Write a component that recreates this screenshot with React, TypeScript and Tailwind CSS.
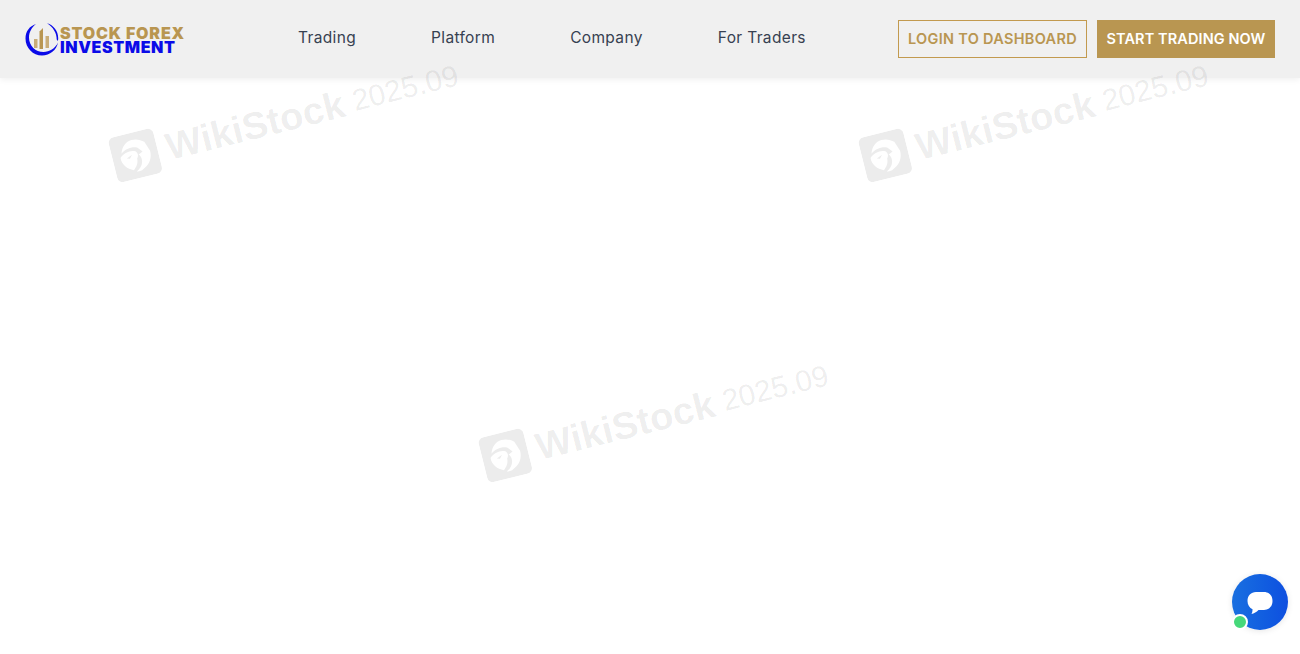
const navItems = ['Trading', 'Platform', 'Company', 'For Traders'];

const LogoMark = () => (
  <svg width="34" height="34" viewBox="0 0 34 34" fill="none">
    <path d="M11 2C4.500 4 0.500 9.500 0.500 16.500C0.500 26 8 33.500 17 33.500C25 33.500 31.500 28 33 20.500C30 26.500 24.500 30 18.500 30C10.500 30 4 24 4 15.500C4 10 6.800 5.300 11 2Z" fill="#0b0be8" />
    <path d="M22 1.200C28.500 3 33.200 9 33.200 16C33.200 17 33.100 18 32.900 19L31.700 17.500C31.900 11 28 5 22 1.200Z" fill="#0b0be8" />
    <rect x="9" y="17" width="3.500" height="9" fill="#c9ad78" />
    <path d="M14.500 9.500L18 6V27H14.500Z" fill="#b99651" />
    <rect x="20.500" y="14" width="3.500" height="12" fill="#c9ad78" />
  </svg>
);

const EagleBadge = () => (
  <svg width="46" height="46" viewBox="0 0 46 46" className="shrink-0">
    <rect x="0" y="0" width="46" height="46" rx="6" fill="#ececec" />
    <path d="M23 7C28 7 32 9 35 12L38.500 22C38.500 28 36 33 31.500 36L26 39C24 39.300 22 39.300 20.500 39C24 37.500 27 34.500 28 31C29 27 28 25 26.500 23L31 21L27 16C22 13.500 15 14 10 18C12 11.500 17 7 23 7Z" fill="#fff" />
    <path d="M8 22C12 18 19 16.500 24 19C26 21 26.500 24 24 26.500C24 31 21.500 34.500 18 37C12 34.500 7.500 29 8 22Z" fill="#fff" />
    <path d="M14 24L20 21.500L17 25Z" fill="#ececec" />
  </svg>
);

const Watermark = ({ className }: { className: string }) => (
  <div className={`pointer-events-none absolute flex origin-left rotate-[-14deg] items-center whitespace-nowrap font-['Liberation_Sans',sans-serif] text-black/[0.08] ${className}`}>
    <EagleBadge />
    <span className="ml-[9px] text-[38px] font-bold leading-none tracking-[0.2px]">WikiStock</span>
    <span className="ml-[9px] text-[30px] leading-none">2025.09</span>
  </div>
);

export default function App() {
  return (
    <div className="relative h-[654px] w-[1300px] overflow-hidden bg-white font-['Inter','Liberation_Sans',sans-serif]">
      <header className="flex h-[78px] items-center bg-[#f0f0f0] px-[25px] shadow-[0_2px_6px_rgba(0,0,0,0.06)]">
        <div className="flex w-[273px] items-center">
          <LogoMark />
          <div className="ml-[1px] mt-[1px] flex flex-col font-black">
            <span className="text-[16px] leading-[14px] tracking-[0.85px] text-[#b99651]">STOCK FOREX</span>
            <span className="text-[16px] leading-[14px] tracking-[0.6px] text-[#0b0be8]">INVESTMENT</span>
          </div>
        </div>
        <nav className="-mt-[2px] flex gap-[75px] text-[15.500px] tracking-[0.35px] text-[#374151]">
          {navItems.map((item) => (
            <a key={item}>{item}</a>
          ))}
        </nav>
        <div className="ml-auto flex gap-[10px] text-[14.500px] font-semibold">
          <button className="h-[38px] w-[189px] border border-[#c29a4f] tracking-[0.3px] text-[#b99651]">LOGIN TO DASHBOARD</button>
          <button className="h-[38px] w-[178px] bg-[#b99651] tracking-[0.1px] text-white">START TRADING NOW</button>
        </div>
      </header>

      <Watermark className="left-[113px] top-[138px]" />
      <Watermark className="left-[863px] top-[138px]" />
      <Watermark className="left-[483px] top-[438px]" />

      <button className="absolute left-[1232px] top-[574px] flex h-14 w-14 items-center justify-center rounded-full bg-gradient-to-r from-[#1a6fe0] to-[#0f4fe0] shadow-[0_1px_6px_rgba(0,0,0,0.1)]">
        <svg width="26" height="24" viewBox="0 0 26 24" className="mt-[1px]">
          <path d="M9 1H17C22 1 25.500 4.500 25.500 10C25.500 15.500 22 19 17 19H11.500C9.500 21 7 22.500 4.500 23C5.300 21.500 5.600 20 5.500 18.200C2.500 16.800 0.500 14 0.500 10C0.500 4.500 4 1 9 1Z" fill="#fff" />
        </svg>
      </button>
      <span className="absolute left-[1232px] top-[614px] h-4 w-4 rounded-full border-2 border-white bg-[#46d87a]" />
    </div>
  );
}
